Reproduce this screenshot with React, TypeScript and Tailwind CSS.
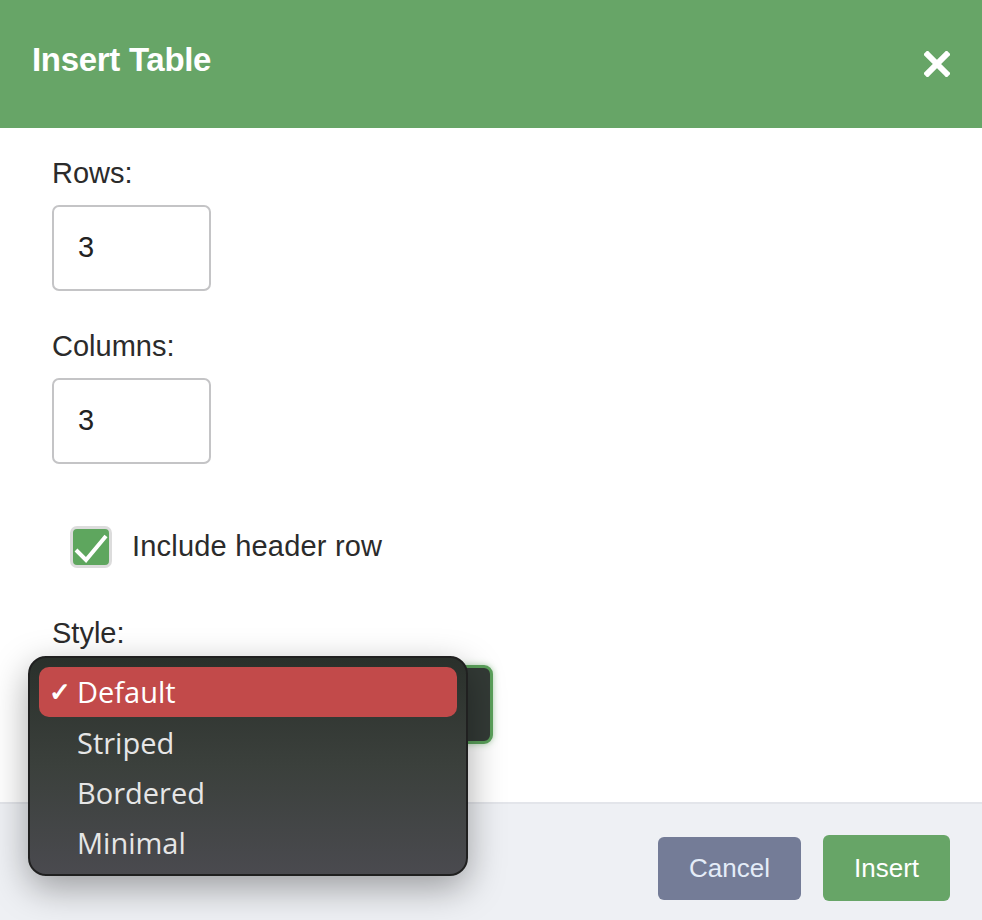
import { useState } from "react";

const STYLES = ["Default", "Striped", "Bordered", "Minimal"];

function Field({ label, value }: { label: string; value: string }) {
  return (
    <div className="flex flex-col">
      <label className="text-[29px] leading-[28px] text-[#2b2b2b]">{label}</label>
      <div className="mt-[18px] w-[159px] h-[86px] rounded-[7px] border-2 border-[#c4c4c6] bg-white flex items-center pl-[24px] text-[29px] text-[#222]">
        {value}
      </div>
    </div>
  );
}

export default function App() {
  const [selected] = useState("Default");

  return (
    <div
      className="w-[982px] h-[920px] flex flex-col bg-white overflow-hidden"
      style={{ fontFamily: '"Liberation Sans", Arial, sans-serif' }}
    >
      <header className="h-[128px] bg-[#67a567] flex items-center justify-between pl-[32px] pr-[32px] pb-[10px]">
        <h1 className="text-white font-bold text-[33px] leading-none tracking-[-0.3px]">Insert Table</h1>
        <svg width="26" height="26" viewBox="0 0 26 26" className="mt-[10px]">
          <path d="M3.5 3.5 L22.5 22.5 M22.5 3.5 L3.5 22.5" stroke="white" strokeWidth="6" strokeLinecap="square" />
        </svg>
      </header>

      <main className="flex-1 pl-[52px] pt-[31px]">
        <Field label="Rows:" value="3" />
        <div className="mt-[41px]">
          <Field label="Columns:" value="3" />
        </div>

        <div className="mt-[61px] ml-[18px] flex items-center gap-[20px]">
          <div className="w-[42px] h-[42px] rounded-[7px] border-[3px] border-[#dcdcdc] bg-[#5ea65e] flex items-center justify-center">
            <svg width="34" height="34" viewBox="0 0 34 34">
              <path d="M2 20 L12 30 L32 6" fill="none" stroke="white" strokeWidth="4" />
            </svg>
          </div>
          <span className="text-[29px] text-[#2b2b2b] tracking-[0.2px]">Include header row</span>
        </div>

        <div className="mt-[50px] text-[29px] leading-[28px] text-[#2b2b2b]">Style:</div>
        <div className="relative mt-[18px] w-[441px] h-[79px]">
          <div className="w-full h-full rounded-[9px] border-[3px] border-[#5aa05a] bg-[#333a36] shadow-[0_0_6px_rgba(90,160,90,0.5)]" />
          <div className="absolute left-[-24px] top-[-9px] w-[440px] h-[220px] rounded-[18px] border-2 border-[#202020] bg-gradient-to-b from-[#2a302b] via-[#3b403c] to-[#4a4a4f] shadow-[0_12px_36px_rgba(0,0,0,0.35)] px-[9px] pt-[9px] flex flex-col">
            {STYLES.map((s) => {
              const on = s === selected;
              return (
                <div
                  key={s}
                  className={
                    "h-[50px] shrink-0 flex items-center rounded-[10px] text-[29px] " +
                    (on ? "bg-[#c24a4a] text-white h-[49px] mb-[1px]" : "text-[#e6e6e6]")
                  }
                  style={{ fontFamily: '"Open Sans", "Liberation Sans", sans-serif' }}
                >
                  <span className="w-[38px] pl-[10px] text-[26px] font-bold">{on ? "✓" : ""}</span>
                  <span className="leading-none">{s}</span>
                </div>
              );
            })}
          </div>
        </div>
      </main>

      <footer className="h-[118px] border-t-2 border-[#e3e5ea] bg-[#eef0f4] flex items-center justify-end gap-[22px] pr-[32px] pt-[12px]">
        <button className="w-[143px] h-[63px] rounded-[6px] bg-[#747c97] text-[#e4ecf8] text-[26px]">Cancel</button>
        <button className="w-[127px] h-[66px] rounded-[6px] bg-[#67a567] text-white text-[26px]">Insert</button>
      </footer>
    </div>
  );
}
